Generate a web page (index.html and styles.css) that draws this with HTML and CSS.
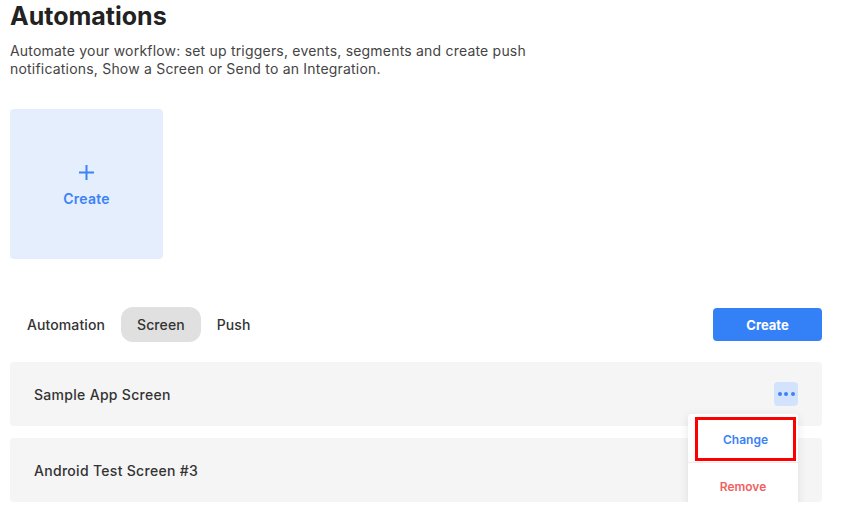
FILE: index.html
```html
<!DOCTYPE html>
<html>
<head>
<meta charset="utf-8">
<link rel="stylesheet" href="styles.css">
</head>
<body>
<main class="page">
  <h1 class="title">Automations</h1>
  <p class="desc">Automate your workflow: set up triggers, events, segments and create push<br>notifications, Show a Screen or Send to an Integration.</p>

  <div class="create-card">
    <svg class="plus" width="15" height="15" viewBox="0 0 15 15"><path d="M7.5 0v15M0 7.5h15" stroke="#3b82f6" stroke-width="2" fill="none"/></svg>
    <span class="create-label">Create</span>
  </div>

  <div class="toolbar">
    <nav class="tabs">
      <span class="tab">Automation</span>
      <span class="tab active">Screen</span>
      <span class="tab">Push</span>
    </nav>
    <button class="btn-create">Create</button>
  </div>

  <ul class="list">
    <li class="row">
      <span class="row-name">Sample App Screen</span>
      <span class="more"><i></i><i></i><i></i></span>
      <div class="menu">
        <div class="menu-item change">Change</div>
        <div class="menu-divider"></div>
        <div class="menu-item remove">Remove</div>
      </div>
    </li>
    <li class="row">
      <span class="row-name">Android Test Screen #3</span>
    </li>
  </ul>
</main>
</body>
</html>
```

FILE: styles.css
```css
* { box-sizing: border-box; }
html, body { margin: 0; padding: 0; background: #fff; }
body { font-family: Inter, "Noto Sans", sans-serif; color: #222; }
.page { width: 812px; margin-left: 10px; padding-top: 2px; }
.title { margin: 0; font-size: 25px; line-height: 29px; font-weight: 700; color: #222; }
.desc { margin: 11px 0 0; font-size: 14px; line-height: 18px; color: #444; letter-spacing: 0.2px; }
.create-card {
  margin-top: 31px;
  width: 153px; height: 150px;
  background: #e4eefd;
  border-radius: 4px;
  display: flex; flex-direction: column; align-items: center; justify-content: center;
  gap: 10px;
  padding-top: 5px;
}
.plus { display: block; }
.create-label { font-size: 14px; line-height: 18px; font-weight: 600; color: #3b82f6; letter-spacing: 0.2px; }
.toolbar { margin-top: 48px; display: flex; align-items: center; justify-content: space-between; height: 35px; }
.tabs { display: flex; }
.tab { height: 35px; padding: 0 16px 0 17px; display: flex; align-items: center; font-size: 14px; font-weight: 500; color: #333; border-radius: 12px; letter-spacing: 0.1px; }
.tab.active { background: #e0e0e0; padding: 0 16px; }
.tab:last-child { padding-left: 16px; }
.btn-create {
  width: 109px; height: 33px; border: 0; border-radius: 4px;
  background: #3480f6; color: #fff;
  font-family: inherit; font-size: 13px; font-weight: 700;
}
.list { list-style: none; margin: 20px 0 0; padding: 0; display: flex; flex-direction: column; gap: 12px; }
.row {
  position: relative;
  height: 64px; background: #f5f5f5; border-radius: 4px;
  display: flex; align-items: center; justify-content: space-between;
  padding: 0 24px;
}
.row-name { font-size: 14px; font-weight: 500; color: #333; letter-spacing: 0.3px; }
.more {
  width: 24px; height: 24px; border-radius: 4px; background: #d4e3fd;
  display: flex; align-items: center; justify-content: center; gap: 2.5px;
}
.more i { width: 4px; height: 4px; border-radius: 50%; background: #3b82f6; display: block; }
.menu {
  position: absolute; top: 52px; right: 24px; z-index: 2;
  width: 110px; height: 95px;
  background: #fff; border-radius: 4px;
  box-shadow: 0 2px 10px rgba(0,0,0,0.10);
  padding-top: 3px;
}
.menu-item { display: flex; align-items: center; justify-content: center; font-size: 12px; font-weight: 600; }
.change { margin: 0 2px 0 7px; height: 44px; border: 3px solid #ff0000; color: #3b82f6; }
.menu-divider { height: 1px; background: #ececec; margin-top: 1px; }
.remove { height: 46px; color: #f25f5f; }
```
